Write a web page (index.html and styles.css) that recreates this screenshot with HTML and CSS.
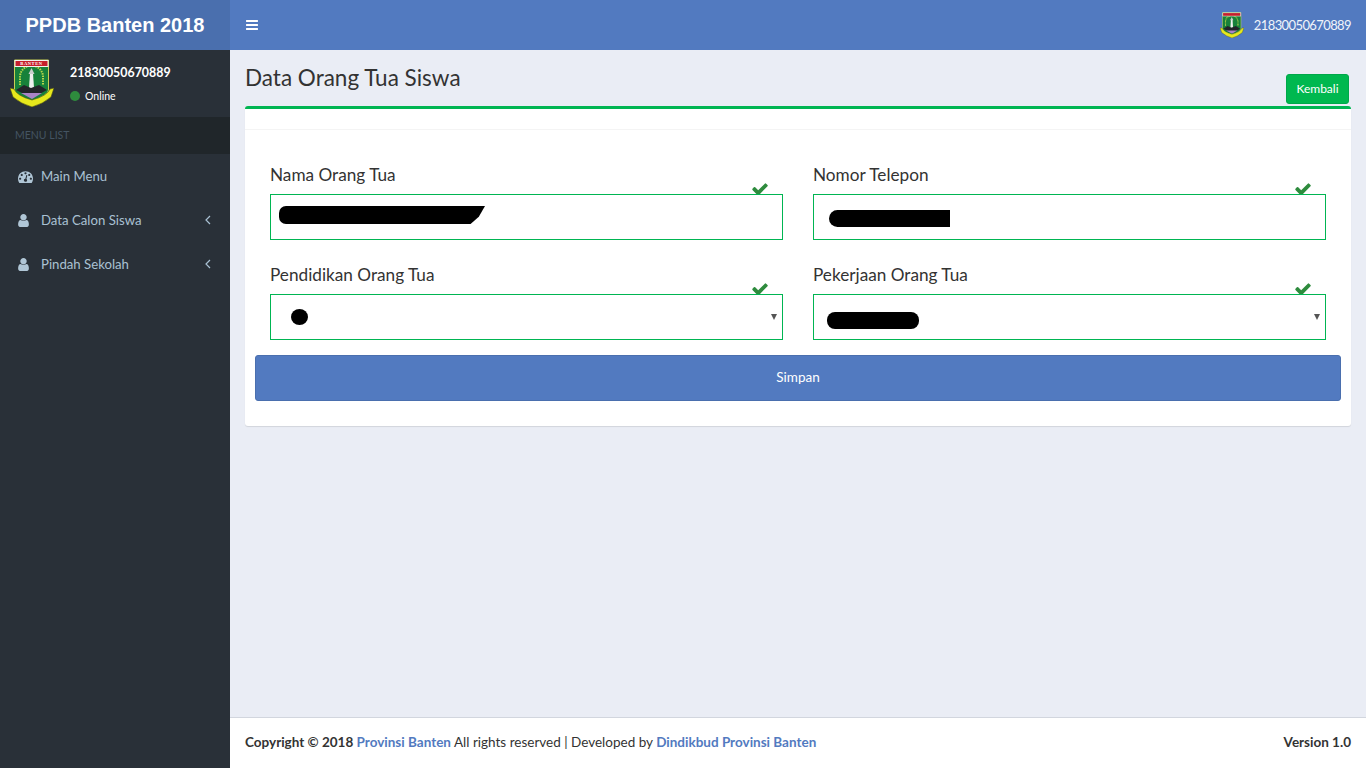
FILE: index.html
```html
<!DOCTYPE html>
<html lang="id">
<head>
    <meta charset="UTF-8">
    <meta name="viewport" content="width=device-width, initial-scale=1.0">
    <title>PPDB Banten 2018</title>
    <link rel="stylesheet" href="styles.css">
</head>
<body>
    <aside class="sidebar">
        <div class="logo">PPDB Banten 2018</div>
        <div class="user-panel">
            <svg class="user-img" viewBox="0 0 44 48">
                <path d="M4.500 1h34v30q0 5-17 11-17-6-17-11z" fill="#17813a" stroke="#c9cf55" stroke-width="1"/>
                <path d="M10 26V18a11.500 11.500 0 0 1 23 0v8" fill="none" stroke="#b9d64a" stroke-width="2" stroke-dasharray="1.500 1"/>
                <path d="M19 29l1-15h3l1 15z" fill="#eef0ee"/>
                <path d="M18.500 15l3-6 3 6z" fill="#c9cfcc"/>
                <path d="M6 31l8-5 7 3 8-3 8 5-15 8z" fill="#23252a"/>
                <path d="M11 34h21l-10 6z" fill="#a983c6"/>
                <path d="M0 29l4 1q3 7 18 11 15-4 18-11l4-1-3 9q-8 7-19 10Q11 45 3 38z" fill="#e6e81c" stroke="#4c4f16" stroke-width=".6"/>
                <rect x="4.500" y="1" width="34" height="7" fill="#f3f3ee"/>
                <rect x="5.500" y="2" width="32" height="5" fill="#c5202c"/>
                <text x="21.500" y="6.300" class="lambang-text">BANTEN</text>
            </svg>
            <div>
                <p class="user-name">21830050670889</p>
                <p class="user-status"><span class="dot"></span>Online</p>
            </div>
        </div>
        <div class="menu-title">MENU LIST</div>
        <ul class="menu">
            <li>
                <svg class="menu-icon" viewBox="0 0 1792 1792"><path d="M384 1152q0-53-37.500-90.500t-90.500-37.500-90.500 37.500-37.500 90.500 37.500 90.500 90.500 37.500 90.500-37.500 37.500-90.500zm192-448q0-53-37.500-90.500t-90.500-37.500-90.500 37.500-37.500 90.500 37.500 90.500 90.500 37.500 90.500-37.500 37.500-90.500zm428 481l101-382q6-26-7.500-48.500t-38.500-29.500-48 6.500-30 39.500l-101 382q-60 5-107 43.500t-63 98.500q-20 77 20 146t117 89 146-20 89-117q16-60-6-117t-72-91zm660-33q0-53-37.500-90.500t-90.500-37.500-90.500 37.500-37.500 90.500 37.500 90.500 90.500 37.500 90.500-37.500 37.500-90.500zm-640-640q0-53-37.500-90.500t-90.500-37.500-90.500 37.500-37.500 90.500 37.500 90.500 90.500 37.500 90.500-37.500 37.500-90.500zm448 192q0-53-37.500-90.500t-90.500-37.500-90.500 37.500-37.500 90.500 37.500 90.500 90.500 37.500 90.500-37.500 37.500-90.500zm320 448q0 261-141 483-19 29-54 29h-1402q-35 0-54-29-141-221-141-483 0-182 71-348t191-286 286-191 348-71 348 71 286 191 191 286 71 348z"/></svg>
                <span>Main Menu</span>
            </li>
            <li>
                <svg class="menu-icon user-icon" viewBox="0 0 1792 1792"><path d="M1536 1399q0 109-62.500 187t-150.500 78h-854q-88 0-150.500-78t-62.500-187q0-85 8.500-160.500t31.500-152 58.500-131 94-89 134.500-34.500q131 128 313 128t313-128q76 0 134.500 34.500t94 89 58.500 131 31.500 152 8.500 160.500zm-256-887q0 159-112.500 271.500t-271.500 112.500-271.500-112.500-112.500-271.500 112.500-271.500 271.500-112.500 271.500 112.500 112.500 271.500z"/></svg>
                <span>Data Calon Siswa</span>
                <svg class="menu-arrow" viewBox="0 0 6 10"><path d="M5 1L1 5l4 4"/></svg>
            </li>
            <li>
                <svg class="menu-icon user-icon" viewBox="0 0 1792 1792"><path d="M1536 1399q0 109-62.500 187t-150.500 78h-854q-88 0-150.500-78t-62.500-187q0-85 8.500-160.500t31.500-152 58.500-131 94-89 134.500-34.500q131 128 313 128t313-128q76 0 134.500 34.500t94 89 58.500 131 31.500 152 8.500 160.500zm-256-887q0 159-112.500 271.500t-271.500 112.500-271.500-112.500-112.500-271.500 112.500-271.500 271.500-112.500 271.500 112.500 112.500 271.500z"/></svg>
                <span>Pindah Sekolah</span>
                <svg class="menu-arrow" viewBox="0 0 6 10"><path d="M5 1L1 5l4 4"/></svg>
            </li>
        </ul>
    </aside>

    <div class="main">
        <header class="topbar">
            <svg class="bars" viewBox="0 0 1792 1792"><path d="M1664 1344v128q0 26-19 45t-45 19h-1408q-26 0-45-19t-19-45v-128q0-26 19-45t45-19h1408q26 0 45 19t19 45zm0-512v128q0 26-19 45t-45 19h-1408q-26 0-45-19t-19-45v-128q0-26 19-45t45-19h1408q26 0 45 19t19 45zm0-512v128q0 26-19 45t-45 19h-1408q-26 0-45-19t-19-45v-128q0-26 19-45t45-19h1408q26 0 45 19t19 45z"/></svg>
            <div class="topbar-user">
                <svg class="topbar-img" viewBox="0 0 44 48">
                    <path d="M4.500 1h34v30q0 5-17 11-17-6-17-11z" fill="#17813a" stroke="#c9cf55" stroke-width="1"/>
                    <path d="M10 26V18a11.500 11.500 0 0 1 23 0v8" fill="none" stroke="#b9d64a" stroke-width="2" stroke-dasharray="1.500 1"/>
                    <path d="M19 29l1-15h3l1 15z" fill="#eef0ee"/>
                    <path d="M18.500 15l3-6 3 6z" fill="#c9cfcc"/>
                    <path d="M6 31l8-5 7 3 8-3 8 5-15 8z" fill="#23252a"/>
                    <path d="M11 34h21l-10 6z" fill="#a983c6"/>
                    <path d="M0 29l4 1q3 7 18 11 15-4 18-11l4-1-3 9q-8 7-19 10Q11 45 3 38z" fill="#e6e81c" stroke="#4c4f16" stroke-width=".6"/>
                    <rect x="4.500" y="1" width="34" height="7" fill="#f3f3ee"/>
                    <rect x="5.500" y="2" width="32" height="5" fill="#c5202c"/>
                </svg>
                <span>21830050670889</span>
            </div>
        </header>

        <main class="content">
            <div class="content-head">
                <h1>Data Orang Tua Siswa</h1>
                <button class="btn-back">Kembali</button>
            </div>
            <section class="box">
                <div class="box-header"></div>
                <form class="box-body">
                    <div class="form-grid">
                        <div class="field">
                            <label>Nama Orang Tua</label>
                            <svg class="check" viewBox="0 0 1792 1792"><path d="M1671 566q0 40-28 68l-724 724-136 136q-28 28-68 28t-68-28l-136-136-362-362q-28-28-28-68t28-68l136-136q28-28 68-28t68 28l294 295 656-657q28-28 68-28t68 28l136 136q28 28 28 68z"/></svg>
                            <div class="control"><span class="scribble s-nama"></span></div>
                        </div>
                        <div class="field">
                            <label>Nomor Telepon</label>
                            <svg class="check" viewBox="0 0 1792 1792"><path d="M1671 566q0 40-28 68l-724 724-136 136q-28 28-68 28t-68-28l-136-136-362-362q-28-28-28-68t28-68l136-136q28-28 68-28t68 28l294 295 656-657q28-28 68-28t68 28l136 136q28 28 28 68z"/></svg>
                            <div class="control"><span class="scribble s-telp"></span></div>
                        </div>
                        <div class="field">
                            <label>Pendidikan Orang Tua</label>
                            <svg class="check" viewBox="0 0 1792 1792"><path d="M1671 566q0 40-28 68l-724 724-136 136q-28 28-68 28t-68-28l-136-136-362-362q-28-28-28-68t28-68l136-136q28-28 68-28t68 28l294 295 656-657q28-28 68-28t68 28l136 136q28 28 28 68z"/></svg>
                            <div class="control select"><span class="scribble s-didik"></span></div>
                        </div>
                        <div class="field">
                            <label>Pekerjaan Orang Tua</label>
                            <svg class="check" viewBox="0 0 1792 1792"><path d="M1671 566q0 40-28 68l-724 724-136 136q-28 28-68 28t-68-28l-136-136-362-362q-28-28-28-68t28-68l136-136q28-28 68-28t68 28l294 295 656-657q28-28 68-28t68 28l136 136q28 28 28 68z"/></svg>
                            <div class="control select"><span class="scribble s-kerja"></span></div>
                        </div>
                    </div>
                    <button type="button" class="btn-save">Simpan</button>
                </form>
            </section>
        </main>

        <footer class="footer">
            <div><b>Copyright © 2018 <a>Provinsi Banten</a></b> All rights reserved | Developed by <b><a>Dindikbud Provinsi Banten</a></b></div>
            <b>Version 1.0</b>
        </footer>
    </div>
</body>
</html>
```

FILE: styles.css
```css
* {
    box-sizing: border-box;
}
body {
    margin: 0;
    height: 768px;
    display: flex;
    overflow: hidden;
    font-family: Lato, "Noto Sans", sans-serif;
    font-size: 14px;
    color: #333;
    background-color: #eaedf5;
}
p, h1, ul {
    margin: 0;
    padding: 0;
}
.lambang-text {
    font-family: "Liberation Serif", serif;
    font-size: 4.500px;
    font-weight: bold;
    fill: #fff;
    text-anchor: middle;
    letter-spacing: 0.6px;
}

/* sidebar */
.sidebar {
    width: 230px;
    flex: none;
    background-color: #293038;
}
.logo {
    height: 50px;
    line-height: 50px;
    text-align: center;
    background-color: #4a6fae;
    color: #fff;
    font-family: "Liberation Sans", Arial, sans-serif;
    font-size: 20px;
    font-weight: bold;
}
.user-panel {
    height: 67px;
    display: flex;
    align-items: flex-start;
    padding: 9px 0 0 10px;
}
.user-img {
    width: 44px;
    height: 48px;
    flex: none;
    margin-right: 16px;
}
.user-name {
    margin-top: 5px;
    color: #fff;
    font-size: 12.400px;
    font-weight: bold;
    line-height: 17px;
}
.user-status {
    margin-top: 8px;
    display: flex;
    align-items: center;
    color: #fff;
    font-size: 10.500px;
    line-height: 14px;
}
.dot {
    width: 10px;
    height: 10px;
    margin-right: 5px;
    border-radius: 50%;
    background-color: #2e8b3d;
}
.menu-title {
    height: 37px;
    line-height: 37px;
    padding-left: 15px;
    background-color: #20262a;
    color: #445462;
    font-size: 10.500px;
}
.menu {
    list-style: none;
}
.menu li {
    height: 44px;
    display: flex;
    align-items: center;
    padding: 0 19px 0 18px;
    color: #a9c1d3;
    font-size: 13.200px;
}
.menu li span {
    padding-bottom: 1px;
}
.menu-icon {
    width: 15px;
    height: 15px;
    flex: none;
    margin-right: 8px;
    fill: #b0c6d6;
}
.user-icon {
    margin-left: -2px;
    margin-right: 10px;
}
.menu-arrow {
    width: 6px;
    height: 10px;
    margin-left: auto;
    fill: none;
    stroke: #a9c1d3;
    stroke-width: 1.200;
}

/* kolom utama */
.main {
    flex: 1;
    display: flex;
    flex-direction: column;
    min-width: 0;
}
.topbar {
    height: 50px;
    flex: none;
    display: flex;
    align-items: center;
    justify-content: space-between;
    padding: 0 15px;
    background-color: #527ac0;
    color: #fff;
}
.bars {
    width: 14px;
    height: 14px;
    fill: #fff;
}
.topbar-user {
    display: flex;
    align-items: center;
    color: #f0f4fa;
    font-size: 13px;
    letter-spacing: -0.6px;
}
.topbar-img {
    width: 24px;
    height: 26px;
    margin-right: 10px;
}
.content {
    flex: 1;
    padding: 0 15px;
}
.content-head {
    height: 56px;
    display: flex;
    justify-content: space-between;
    align-items: flex-start;
}
.content-head h1 {
    margin-top: 13px;
    font-size: 22.500px;
    font-weight: normal;
    line-height: 29px;
}
.btn-back {
    margin: 24px 2px 0 0;
    width: 63px;
    height: 30px;
    padding: 0 0 2px;
    border: 1px solid #00a84a;
    border-radius: 3px;
    background-color: #00b84f;
    color: #fff;
    font-family: inherit;
    font-size: 12px;
}
.box {
    height: 320px;
    border-top: 3px solid #00b552;
    border-radius: 3px;
    background-color: #fff;
    box-shadow: 0 1px 1px rgba(0, 0, 0, 0.1);
}
.box-header {
    height: 21px;
    border-bottom: 1px solid #f4f4f4;
}
.box-body {
    padding: 30px 10px 0;
}
.form-grid {
    display: grid;
    grid-template-columns: 1fr 1fr;
    column-gap: 30px;
    row-gap: 20px;
    padding: 0 15px;
    margin-bottom: 15px;
}
.field {
    position: relative;
}
.field label {
    display: block;
    height: 34px;
    padding-top: 4px;
    font-size: 17.200px;
    line-height: 21px;
    color: #333;
}
.check {
    position: absolute;
    top: 20px;
    right: 14px;
    width: 18px;
    height: 18px;
    fill: #2e8b3d;
}
.control {
    height: 46px;
    position: relative;
    display: flex;
    align-items: center;
    border: 1px solid #00b552;
    background-color: #fff;
}
.select::after {
    content: "";
    position: absolute;
    right: 5px;
    top: 19px;
    border-left: 3px solid transparent;
    border-right: 3px solid transparent;
    border-top: 6px solid #555;
}
.scribble {
    display: block;
    background-color: #000;
    filter: blur(0.6px);
}
.s-nama {
    width: 206px;
    height: 18px;
    margin: 0 0 4px 8px;
    border-radius: 7px 0 6px 7px;
    clip-path: polygon(0 0, 100% 0, 97% 60%, 93% 100%, 0 100%);
}
.s-telp {
    width: 121px;
    height: 17px;
    margin: 3px 0 0 15px;
    border-radius: 9px 0 0 9px;
}
.s-didik {
    width: 17px;
    height: 16px;
    margin: 0 0 0 20px;
    border-radius: 50%;
}
.s-kerja {
    width: 92px;
    height: 17px;
    margin: 6px 0 0 13px;
    border-radius: 8px;
}
.btn-save {
    display: block;
    width: 100%;
    height: 46px;
    padding: 0 0 2px;
    border: 1px solid #4a6fae;
    border-radius: 3px;
    background-color: #527ac0;
    color: #fff;
    font-family: inherit;
    font-size: 13.500px;
}
.footer {
    height: 51px;
    flex: none;
    display: flex;
    align-items: center;
    justify-content: space-between;
    padding: 0 15px 2px;
    border-top: 1px solid #d2d6de;
    background-color: #fff;
    font-size: 13.500px;
}
.footer a {
    color: #527ac0;
}
```
